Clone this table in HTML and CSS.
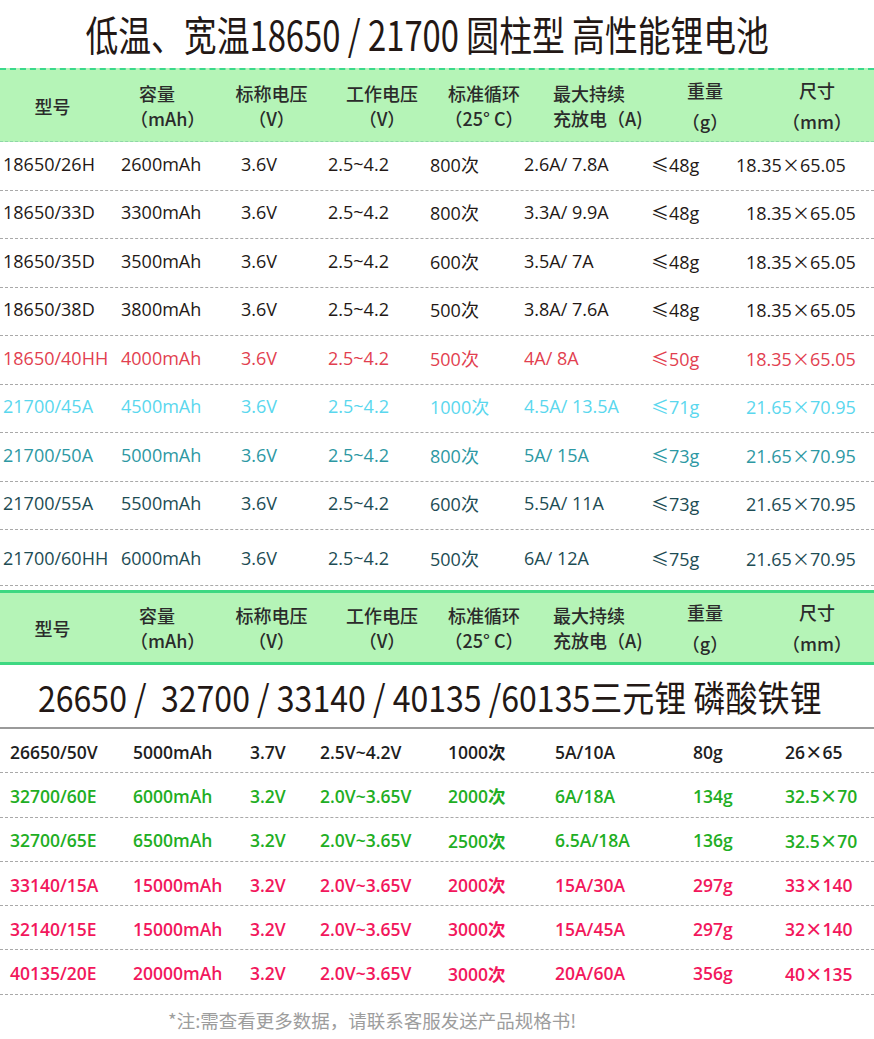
FILE: index.html
```html
<!DOCTYPE html>
<html lang="zh-CN">
<head>
<meta charset="utf-8">
<title>低温、宽温18650 / 21700 圆柱型 高性能锂电池</title>
<link rel="stylesheet" href="styles.css">
</head>
<body>
<div class="page">
  <div class="title"><span class="title-text">低温、宽温18650 / 21700 圆柱型 高性能锂电池</span></div>

  <div class="head head-dashed">
    <div class="hc c-model"><span>型号</span></div>
    <div class="hc c-cap"><span>容量</span><span>（mAh）</span></div>
    <div class="hc c-nom"><span>标称电压</span><span>（V）</span></div>
    <div class="hc c-work"><span>工作电压</span><span>（V）</span></div>
    <div class="hc c-cyc"><span>标准循环</span><span>（25° C）</span></div>
    <div class="hc c-cur"><span>最大持续</span><span>充放电（A)</span></div>
    <div class="hc c-wt wide"><span>重量</span><span>（g）</span></div>
    <div class="hc c-size wide"><span>尺寸</span><span>（mm）</span></div>
  </div>

  <div class="rows1">
    <div class="r1 dark"><span>18650/26H</span><span>2600mAh</span><span>3.6V</span><span>2.5~4.2</span><span>800<i class="cj">次</i></span><span>2.6A/ 7.8A</span><span><i class="cj">≤</i>48g</span><span class="pull">18.35<i class="cj">×</i>65.05</span></div>
    <div class="r1 dark"><span>18650/33D</span><span>3300mAh</span><span>3.6V</span><span>2.5~4.2</span><span>800<i class="cj">次</i></span><span>3.3A/ 9.9A</span><span><i class="cj">≤</i>48g</span><span>18.35<i class="cj">×</i>65.05</span></div>
    <div class="r1 dark"><span>18650/35D</span><span>3500mAh</span><span>3.6V</span><span>2.5~4.2</span><span>600<i class="cj">次</i></span><span>3.5A/ 7A</span><span><i class="cj">≤</i>48g</span><span>18.35<i class="cj">×</i>65.05</span></div>
    <div class="r1 dark"><span>18650/38D</span><span>3800mAh</span><span>3.6V</span><span>2.5~4.2</span><span>500<i class="cj">次</i></span><span>3.8A/ 7.6A</span><span><i class="cj">≤</i>48g</span><span>18.35<i class="cj">×</i>65.05</span></div>
    <div class="r1 red"><span>18650/40HH</span><span>4000mAh</span><span>3.6V</span><span>2.5~4.2</span><span>500<i class="cj">次</i></span><span>4A/ 8A</span><span><i class="cj">≤</i>50g</span><span>18.35<i class="cj">×</i>65.05</span></div>
    <div class="r1 cyan"><span>21700/45A</span><span>4500mAh</span><span>3.6V</span><span>2.5~4.2</span><span>1000<i class="cj">次</i></span><span>4.5A/ 13.5A</span><span><i class="cj">≤</i>71g</span><span>21.65<i class="cj">×</i>70.95</span></div>
    <div class="r1 teal"><span>21700/50A</span><span>5000mAh</span><span>3.6V</span><span>2.5~4.2</span><span>800<i class="cj">次</i></span><span>5A/ 15A</span><span><i class="cj">≤</i>73g</span><span>21.65<i class="cj">×</i>70.95</span></div>
    <div class="r1 slate"><span>21700/55A</span><span>5500mAh</span><span>3.6V</span><span>2.5~4.2</span><span>600<i class="cj">次</i></span><span>5.5A/ 11A</span><span><i class="cj">≤</i>73g</span><span>21.65<i class="cj">×</i>70.95</span></div>
    <div class="r1 slate tall"><span>21700/60HH</span><span>6000mAh</span><span>3.6V</span><span>2.5~4.2</span><span>500<i class="cj">次</i></span><span>6A/ 12A</span><span><i class="cj">≤</i>75g</span><span>21.65<i class="cj">×</i>70.95</span></div>
  </div>

  <div class="head head-solid">
    <div class="hc c-model"><span>型号</span></div>
    <div class="hc c-cap"><span>容量</span><span>（mAh）</span></div>
    <div class="hc c-nom"><span>标称电压</span><span>（V）</span></div>
    <div class="hc c-work"><span>工作电压</span><span>（V）</span></div>
    <div class="hc c-cyc"><span>标准循环</span><span>（25° C）</span></div>
    <div class="hc c-cur"><span>最大持续</span><span>充放电（A)</span></div>
    <div class="hc c-wt wide"><span>重量</span><span>（g）</span></div>
    <div class="hc c-size wide"><span>尺寸</span><span>（mm）</span></div>
  </div>

  <div class="subtitle"><span class="subtitle-text">26650 /&nbsp; 32700 / 33140 / 40135 /60135三元锂 磷酸铁锂</span></div>

  <div class="rows2">
    <div class="r2 black"><span>26650/50V</span><span>5000mAh</span><span>3.7V</span><span>2.5V~4.2V</span><span>1000<i class="cj">次</i></span><span>5A/10A</span><span>80g</span><span>26<i class="cj">×</i>65</span></div>
    <div class="r2 green"><span>32700/60E</span><span>6000mAh</span><span>3.2V</span><span>2.0V~3.65V</span><span>2000<i class="cj">次</i></span><span>6A/18A</span><span>134g</span><span>32.5<i class="cj">×</i>70</span></div>
    <div class="r2 green"><span>32700/65E</span><span>6500mAh</span><span>3.2V</span><span>2.0V~3.65V</span><span>2500<i class="cj">次</i></span><span>6.5A/18A</span><span>136g</span><span>32.5<i class="cj">×</i>70</span></div>
    <div class="r2 pink"><span>33140/15A</span><span>15000mAh</span><span>3.2V</span><span>2.0V~3.65V</span><span>2000<i class="cj">次</i></span><span>15A/30A</span><span>297g</span><span>33<i class="cj">×</i>140</span></div>
    <div class="r2 pink"><span>32140/15E</span><span>15000mAh</span><span>3.2V</span><span>2.0V~3.65V</span><span>3000<i class="cj">次</i></span><span>15A/45A</span><span>297g</span><span>32<i class="cj">×</i>140</span></div>
    <div class="r2 pink"><span>40135/20E</span><span>20000mAh</span><span>3.2V</span><span>2.0V~3.65V</span><span>3000<i class="cj">次</i></span><span>20A/60A</span><span>356g</span><span>40<i class="cj">×</i>135</span></div>
  </div>

  <div class="note">*注:需查看更多数据，请联系客服发送产品规格书!</div>
</div>
</body>
</html>
```
FILE: styles.css
```css
* { box-sizing: border-box; }
html, body { margin: 0; padding: 0; background: #fff; }
.page {
  width: 874px;
  height: 1039px;
  overflow: hidden;
  font-family: "Open Sans", "Noto Sans CJK SC", sans-serif;
  color: #231815;
}
i.cj { font-style: normal; font-family: "Noto Sans CJK SC", sans-serif; }

/* main title */
.title {
  height: 68px;
  display: flex;
  align-items: center;
  justify-content: center;
  padding-right: 20px;
}
.title-text {
  display: inline-block;
  font-family: "Noto Sans CJK SC", sans-serif;
  font-size: 41px;
  line-height: 1;
  color: #231815;
  transform: scaleX(0.8);
  white-space: nowrap;
  padding-bottom: 2px;
}

/* header band */
.head {
  display: grid;
  grid-template-columns: 105px 110px 113px 108px 96px 118px 110px 1fr;
  background: #b5f4b7;
  font-family: "Noto Sans CJK SC", sans-serif;
  font-weight: 500;
  font-size: 18px;
  color: #2b2b2b;
}
.head-dashed {
  height: 74px;
  border-top: 2px dashed #3ad98c;
  border-bottom: 1px dashed #8fd7a7;
}
.head-solid {
  height: 75px;
  margin-top: 4px;
  border-top: 3px solid #3ed882;
  border-bottom: 3px solid #3ed882;
}
.hc {
  display: flex;
  flex-direction: column;
  justify-content: center;
  align-items: center;
  line-height: 25px;
  white-space: nowrap;
}
.hc.c-cap { align-items: flex-start; padding-left: 34px; }
.hc.c-cap span:last-child { margin-left: -9px; }
.hc.c-cur { align-items: flex-start; padding-left: 21px; }
.hc.wide { line-height: 31px; }
.hc.c-model { padding-top: 2px; }

/* section 1 rows */
.r1 {
  display: grid;
  grid-template-columns: 118px 120px 87px 102px 94px 127px 95px 1fr;
  align-items: center;
  height: 48.5px;
  padding-left: 3px;
  padding-bottom: 4px;
  border-bottom: 1px dashed #a9a9a9;
  font-size: 18px;
  white-space: nowrap;
}
.r1.tall { height: 56px; padding-bottom: 0; }
.r1 .pull { margin-left: -10px; }

.dark  { color: #231815; }
.red   { color: #e23f50; }
.cyan  { color: #5ad7ee; }
.teal  { color: #2d98a3; }
.slate { color: #1d4c54; }

/* second title */
.subtitle {
  height: 64px;
  display: flex;
  align-items: center;
  padding-left: 38px;
  border-bottom: 2px solid #9a9a9a;
}
.subtitle-text {
  display: inline-block;
  font-family: "Noto Sans CJK SC", sans-serif;
  font-size: 36px;
  line-height: 1;
  color: #231815;
  white-space: nowrap;
  transform: scaleX(0.89);
  transform-origin: left center;
}

/* section 2 rows */
.r2 {
  display: grid;
  grid-template-columns: 123px 117px 70px 128px 107px 138px 92px 1fr;
  align-items: center;
  height: 44.3px;
  padding-left: 10px;
  padding-top: 2px;
  border-bottom: 1px dashed #a9a9a9;
  font-size: 17.5px;
  font-weight: 600;
  white-space: nowrap;
}
.black { color: #1e1e1e; }
.green { color: #1fae24; }
.pink  { color: #f2175c; }

.note {
  height: 46px;
  display: flex;
  align-items: center;
  padding-left: 168px;
  padding-top: 4px;
  font-family: "Noto Sans CJK SC", sans-serif;
  font-weight: 400;
  font-size: 18.5px;
  color: #9d9d9d;
  white-space: nowrap;
}
```
